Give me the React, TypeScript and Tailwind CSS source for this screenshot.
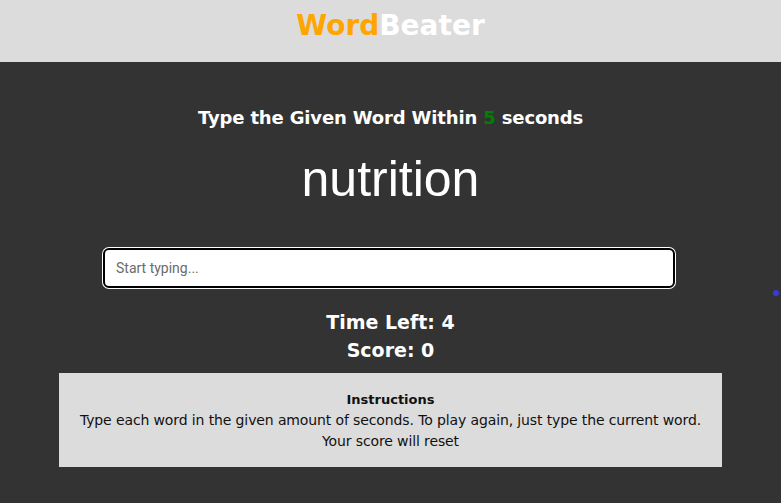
export default function App() {
  const comic = { fontFamily: '"Comic Sans MS", "DejaVu Sans", sans-serif' };

  return (
    <div className="relative min-h-[503px] w-full bg-[#333333]" style={comic}>
      <header className="flex h-[62px] items-start justify-center bg-[#dcdcdc] pt-[6px]">
        <h1 className="text-[28px] leading-[40px] font-bold">
          <span className="text-[#ffa500]">Word</span>
          <span className="text-white">Beater</span>
        </h1>
      </header>

      <main className="flex flex-col items-center">
        <p className="mt-[43px] text-[18px] leading-[26px] font-bold tracking-[-0.15px] text-white">
          Type the Given Word Within <span className="text-[#008000]">5</span> seconds
        </p>
        <h2
          className="mt-[20px] text-[50px] leading-[56px] text-white"
          style={{ fontFamily: '"Liberation Sans", Arial, sans-serif' }}
        >
          nutrition
        </h2>

        <input
          type="text"
          placeholder="Start typing..."
          className="mt-[41px] -ml-[3px] h-[40px] w-[572px] rounded-[6px] border-2 border-black bg-white px-[11px] text-[14px] text-gray-800 shadow-[0_0_0_1px_#ffffff] outline-none placeholder:text-[#6b6b6b]"
          style={{ fontFamily: 'Roboto, "Liberation Sans", sans-serif' }}
        />

        <div className="mt-[20px] flex flex-col items-center text-[19px] leading-[28px] font-bold text-white">
          <p>Time Left: 4</p>
          <p>Score: 0</p>
        </div>

        <div className="mt-[9px] flex w-[663px] flex-col items-center bg-[#dcdcdc] px-1 pt-[17px] pb-[15px] text-center text-[#111]">
          <p className="text-[13px] leading-[20px] font-bold">Instructions</p>
          <p className="text-[14px] leading-[21px] tracking-[-0.12px] whitespace-nowrap">
            Type each word in the given amount of seconds. To play again, just type the current word.
          </p>
          <p className="text-[14px] leading-[21px] tracking-[-0.12px]">Your score will reset</p>
        </div>
      </main>

      <span className="absolute top-[290px] left-[773px] h-[6px] w-[6px] rounded-full bg-[#3b3bd0]" />
    </div>
  );
}
